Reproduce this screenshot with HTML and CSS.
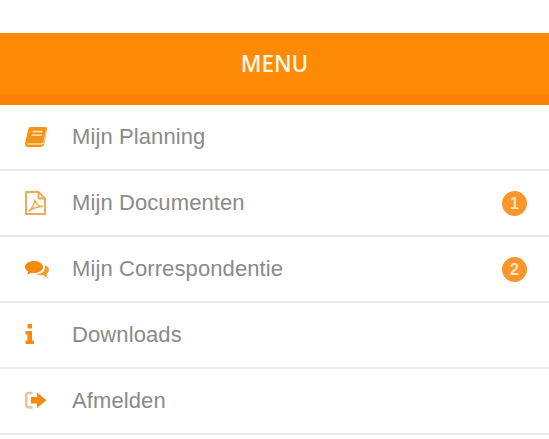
FILE: index.html
```html
<!DOCTYPE html>
<html lang="en">
<head>
    <meta charset="UTF-8">
    <meta name="viewport" content="width=device-width, initial-scale=1.0">
    <title>Menu</title>
    <link rel="stylesheet" href="styles.css">
</head>
<body>

<div class="header">MENU</div>

<ul class="menu">
    <li class="menu-item">
        <svg class="icon" viewBox="0 0 24 24">
            <path fill="#f39419" d="M6 2H20Q22.500 2 22 4.500L19.500 18Q19 21.500 16 22H3Q-.3 22 .2 18L3 5Q3.500 2 6 2Z"/>
            <path fill="#fbd9a8" d="M2.500 18.300H16.500Q18 18.300 18.500 16.500L21 4.500L21.600 5L19.200 17.500Q18.800 19.700 16.500 19.700H3Q2 19.700 2.500 18.300Z"/>
            <path fill="#fbd9a8" d="M7.700 5.800H17.700L17.300 7.600H7.300ZM7 9.200H17L16.600 11H6.600Z"/>
        </svg>
        <span class="label">Mijn Planning</span>
    </li>
    <li class="menu-item">
        <svg class="icon" viewBox="0 0 24 24">
            <path fill="none" stroke="#eeaa58" stroke-width="2" stroke-linejoin="round" d="M1 1H13.500L20 7.500V23H1ZM13.500 1V7.500H20"/>
            <path fill="none" stroke="#eeaa58" stroke-width="1.400" d="M3.500 20.500C6.500 18.500 9.500 13 10 8.500C10.500 13 13 15.500 18 15.500C13.500 15.500 7.500 17 3.500 20.500Z"/>
        </svg>
        <span class="label">Mijn Documenten</span>
        <span class="badge">1</span>
    </li>
    <li class="menu-item">
        <svg class="icon" viewBox="0 0 24 24">
            <path fill="#f58a0f" d="M9 4C14.200 4 18 6.700 18 10S14.200 16 9 16Q7.700 16 6.500 15.700Q4.300 17.400 1.700 17.800Q3.100 16.200 3.300 14.500Q0 12.800 0 10C0 6.700 3.800 4 9 4Z"/>
            <path fill="#f39a2c" d="M19.800 8.300Q24 9.800 24 13Q24 15.400 21.500 16.900Q21.700 18.700 23 21Q20.300 19.800 18.500 18.200Q13.500 18.800 10.500 17Q17 17 19.100 13.500Q20.400 11 19.800 8.300Z"/>
        </svg>
        <span class="label">Mijn Correspondentie</span>
        <span class="badge">2</span>
    </li>
    <li class="menu-item">
        <svg class="icon" viewBox="0 0 24 24">
            <path fill="#f28c12" d="M2.500 1H7V5.500H2.500ZM.5 8H7V17.500H9V21H.5V17.500H2.500V11.500H.5Z"/>
        </svg>
        <span class="label">Downloads</span>
    </li>
    <li class="menu-item">
        <svg class="icon" viewBox="0 0 24 24">
            <path fill="none" stroke="#e8c48c" stroke-width="2.400" d="M7.500 4H4Q1.200 4 1.200 6.800V15.700Q1.200 18.500 4 18.500H7.500"/>
            <path fill="#f58a0f" d="M6 8H12V3.500L21.500 11.250L12 19V14.500H6Z"/>
        </svg>
        <span class="label">Afmelden</span>
    </li>
</ul>

</body>
</html>
```

FILE: styles.css
```css
body {
    font-family: 'Liberation Sans', Arial, sans-serif;
    background-color: #fff;
    margin: 0;
    padding: 33px 0 0;
    overflow: hidden;
}

.header {
    height: 72px;
    box-sizing: border-box;
    padding-top: 16px;
    background: linear-gradient(#ff8a05 0, #ff8a05 61px, #fd7f03 61px, #fd7f03 100%);
    color: #fff6e6;
    font-family: 'Open Sans', sans-serif;
    font-size: 22.5px;
    font-weight: 600;
    line-height: 30px;
    text-align: center;
}

.menu {
    list-style: none;
    margin: 0;
    padding: 0;
}

.menu-item {
    display: flex;
    align-items: center;
    height: 66px;
    box-sizing: border-box;
    padding: 0 22px 0 25px;
    border-bottom: 2px solid #e8e8e8;
}

.icon {
    width: 24px;
    height: 24px;
    flex: none;
}

.label {
    margin-left: 23px;
    color: #8a8a8a;
    font-size: 22px;
    letter-spacing: 0.1px;
}

.badge {
    width: 25px;
    height: 25px;
    margin-left: auto;
    border-radius: 50%;
    background-color: #f7962b;
    color: #fde3c2;
    font-size: 16px;
    font-weight: bold;
    line-height: 25px;
    text-align: center;
}
```
